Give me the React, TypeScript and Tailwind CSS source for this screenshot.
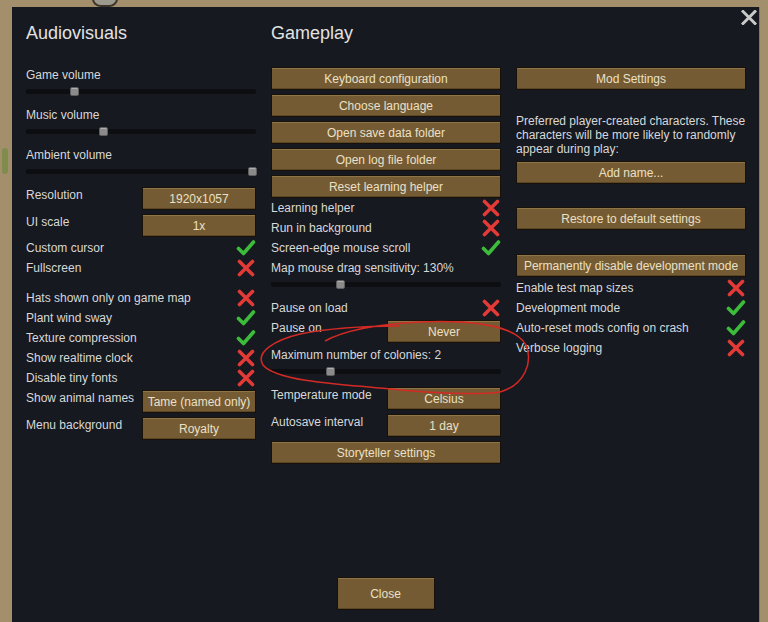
import React from "react";

const font = { fontFamily: '"Liberation Sans", Arial, sans-serif' };

function Btn({ children, className = "" }: { children: React.ReactNode; className?: string }) {
  return (
    <div
      className={`h-[23px] flex items-center justify-center bg-[#745b33] text-[#ebe0c6] text-[12px] leading-none border border-[#17110a] shadow-[inset_0_1px_0_#8e7548,inset_0_-1px_0_#5b4626] whitespace-nowrap ${className}`}
    >
      {children}
    </div>
  );
}

function Check() {
  return (
    <svg width="20" height="18" viewBox="0 0 20 18">
      <path d="M2.5 9.5 L7.5 14.5 L17.5 3" fill="none" stroke="#3dbb3a" strokeWidth="3.6" strokeLinecap="round" strokeLinejoin="round" />
    </svg>
  );
}

function Cross() {
  return (
    <svg width="20" height="18" viewBox="0 0 20 18">
      <path d="M3.5 2.5 L16.5 15.5 M16.5 2.5 L3.5 15.5" fill="none" stroke="#e23a36" strokeWidth="3.6" strokeLinecap="round" />
    </svg>
  );
}

function Toggle({ label, on }: { label: string; on: boolean }) {
  return (
    <div className="h-[20px] flex items-center justify-between">
      <span>{label}</span>
      {on ? <Check /> : <Cross />}
    </div>
  );
}

function Label({ children }: { children: React.ReactNode }) {
  return <div className="h-[20px] flex items-center">{children}</div>;
}

function Slider({ at }: { at: number }) {
  return (
    <div className="h-[12px] flex items-center">
      <div className="relative w-full h-[5px] bg-[#0c0e11] rounded-[2px]">
        <div
          className="absolute top-[-2px] w-[9px] h-[9px] rounded-[2px] bg-[#8b8b8b] border border-[#5e5e5e] shadow-[inset_0_1px_0_#b0b0b0]"
          style={{ left: at - 4 }}
        />
      </div>
    </div>
  );
}

function Pick({ label, value, className = "" }: { label: string; value: string; className?: string }) {
  return (
    <div className={`flex items-start justify-between h-[23px] ${className}`}>
      <span className="leading-[16px]">{label}</span>
      <Btn className="w-[114px]">{value}</Btn>
    </div>
  );
}

export default function App() {
  return (
    <div className="relative w-[768px] h-[622px] overflow-hidden bg-[#a38f6c] pl-[12px] pt-[7px] pr-[8px]" style={font}>
      <div className="absolute left-[92px] top-[-10px] w-[26px] h-[17px] rounded-full bg-[#9c9a8e] border-2 border-[#3a3428]" />
      <div className="absolute left-[2px] top-[148px] w-[6px] h-[26px] rounded-full bg-[#6f8a3e] opacity-70" />

      <div className="relative h-[640px] bg-[#161920] border-r border-[#7a7a72] pl-[14px] pt-[15px] text-[12px] text-[#d8d8d8]">
        <div className="absolute right-[2px] top-[3px]">
          <svg width="16" height="15" viewBox="0 0 16 15">
            <path d="M2 1.5 L14 13.5 M14 1.5 L2 13.5" stroke="#c9c9c9" strokeWidth="3" strokeLinecap="square" />
          </svg>
        </div>

        <div className="flex items-start gap-[15px]">
          {/* Audiovisuals */}
          <div className="w-[230px] flex flex-col">
            <div className="h-[43px] text-[18px] leading-[22px] text-[#e2e2e2]">Audiovisuals</div>
            <Label>Game volume</Label>
            <Slider at={48} />
            <div className="h-[8px]" />
            <Label>Music volume</Label>
            <Slider at={77} />
            <div className="h-[8px]" />
            <Label>Ambient volume</Label>
            <Slider at={226} />
            <div className="h-[10px]" />
            <Pick label="Resolution" value="1920x1057" />
            <Pick label="UI scale" value="1x" className="mt-[4px]" />
            <div className="h-[1px]" />
            <Toggle label="Custom cursor" on />
            <Toggle label="Fullscreen" on={false} />
            <div className="h-[10px]" />
            <Toggle label="Hats shown only on game map" on={false} />
            <Toggle label="Plant wind sway" on />
            <Toggle label="Texture compression" on />
            <Toggle label="Show realtime clock" on={false} />
            <Toggle label="Disable tiny fonts" on={false} />
            <Pick label="Show animal names" value="Tame (named only)" className="mt-[2px]" />
            <Pick label="Menu background" value="Royalty" className="mt-[4px]" />
          </div>

          {/* Gameplay */}
          <div className="w-[230px] flex flex-col">
            <div className="h-[45px] text-[18px] leading-[22px] text-[#e2e2e2]">Gameplay</div>
            <div className="flex flex-col gap-[4px]">
              <Btn>Keyboard configuration</Btn>
              <Btn>Choose language</Btn>
              <Btn>Open save data folder</Btn>
              <Btn>Open log file folder</Btn>
              <Btn>Reset learning helper</Btn>
            </div>
            <Toggle label="Learning helper" on={false} />
            <Toggle label="Run in background" on={false} />
            <Toggle label="Screen-edge mouse scroll" on />
            <Label>Map mouse drag sensitivity: 130%</Label>
            <Slider at={69} />
            <div className="h-[8px]" />
            <Toggle label="Pause on load" on={false} />
            <Pick label="Pause on" value="Never" className="mt-[2px]" />
            <div className="h-[2px]" />
            <Label>Maximum number of colonies: 2</Label>
            <Slider at={59} />
            <div className="h-[10px]" />
            <Pick label="Temperature mode" value="Celsius" />
            <Pick label="Autosave interval" value="1 day" className="mt-[4px]" />
            <Btn className="mt-[4px]">Storyteller settings</Btn>
          </div>

          {/* Right column */}
          <div className="w-[230px] flex flex-col">
            <div className="h-[45px]" />
            <Btn>Mod Settings</Btn>
            <p className="mt-[24px] leading-[14px]">
              Preferred player-created characters. These characters will be more likely to randomly appear during play:
            </p>
            <Btn className="mt-[5px]">Add name...</Btn>
            <Btn className="mt-[23px]">Restore to default settings</Btn>
            <Btn className="mt-[24px]">Permanently disable development mode</Btn>
            <div className="h-[1px]" />
            <Toggle label="Enable test map sizes" on={false} />
            <Toggle label="Development mode" on />
            <Toggle label="Auto-reset mods config on crash" on />
            <Toggle label="Verbose logging" on={false} />
          </div>
        </div>

        <div className="flex justify-center pr-[14px] mt-[113px]">
          <Btn className="w-[98px] h-[33px]">Close</Btn>
        </div>
      </div>

      <svg className="absolute inset-0 pointer-events-none" width="768" height="622">
        <path
          d="M 325 341 C 345 330, 380 324, 420 322 C 470 320, 515 325, 526 345 C 533 362, 525 385, 500 392 C 470 396, 420 392, 380 388 C 330 384, 275 380, 263 365 C 255 352, 275 340, 300 334 C 330 328, 370 326, 400 326"
          fill="none"
          stroke="#d42a25"
          strokeWidth="1.5"
        />
      </svg>
    </div>
  );
}
